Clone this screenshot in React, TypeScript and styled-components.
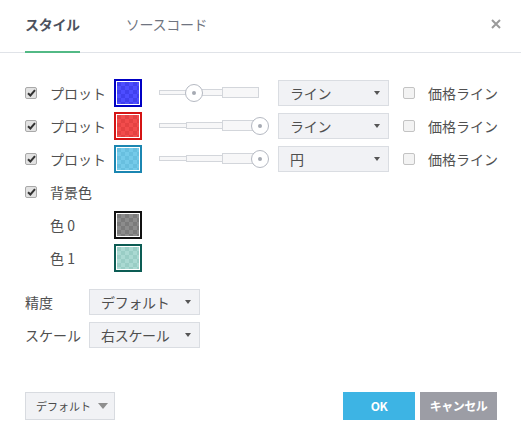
import React from "react";
import styled, { createGlobalStyle } from "styled-components";

const Global = createGlobalStyle`
  html, body { margin: 0; padding: 0; background: #fff; }
  body { font-family: "Noto Sans CJK JP", "Noto Sans", "Liberation Sans", sans-serif; }
  * { box-sizing: border-box; }
`;

const Dialog = styled.div`
  width: 521px;
  height: 445px;
  background: #fff;
  display: flex;
  flex-direction: column;
  color: #4f4f4f;
  font-size: 14px;
`;

const Header = styled.div`
  height: 53px;
  border-bottom: 1px solid #e0e3e8;
  display: flex;
  align-items: stretch;
  padding-left: 25px;
  padding-right: 20px;
`;

const Tab = styled.div<{ $active?: boolean }>`
  display: flex;
  align-items: center;
  margin-right: 46px;
  padding-bottom: 3px;
  font-size: 14px;
  font-weight: ${(p) => (p.$active ? 700 : 400)};
  color: ${(p) => (p.$active ? "#4c525e" : "#6f7480")};
  border-bottom: 2px solid ${(p) => (p.$active ? "#52b985" : "transparent")};
  margin-bottom: -1px;
  letter-spacing: -0.3px;
`;

const Close = styled.div`
  margin-left: auto;
  display: flex;
  align-items: flex-start;
  padding-top: 19px;
`;

const Content = styled.div`
  flex: 1;
  padding: 23px 25px 0 25px;
`;

const Row = styled.div`
  height: 33px;
  display: flex;
  align-items: center;
`;

const Label = styled.span<{ $w?: number; $indent?: number }>`
  width: ${(p) => (p.$w ? `${p.$w}px` : "auto")};
  margin-left: ${(p) => p.$indent || 0}px;
  white-space: nowrap;
  flex-shrink: 0;
  color: #505050;
`;

const Box = styled.span<{ $checked?: boolean }>`
  width: 12px;
  height: 12px;
  border: 1px solid ${(p) => (p.$checked ? "#a9a9a9" : "#c3c3c3")};
  border-radius: 2px;
  background: ${(p) => (p.$checked ? "#e2e2e2" : "#f3f3f3")};
  display: inline-flex;
  align-items: center;
  justify-content: center;
  flex-shrink: 0;
  margin-right: 13px;
`;

const Check = ({ checked }: { checked?: boolean }) => (
  <Box $checked={checked}>
    {checked && (
      <svg width="9" height="8" viewBox="0 0 9 8">
        <path d="M1 4.2 L3.4 6.5 L8 1.2" fill="none" stroke="#333" strokeWidth="2" />
      </svg>
    )}
  </Box>
);

const Swatch = styled.span<{ $border: string; $a: string; $b: string }>`
  width: 28px;
  height: 28px;
  border: 2px solid ${(p) => p.$border};
  padding: 1px;
  background: #fff;
  flex-shrink: 0;
  display: inline-block;
  &::after {
    content: "";
    display: block;
    width: 100%;
    height: 100%;
    background: repeating-conic-gradient(${(p) => p.$a} 0 25%, ${(p) => p.$b} 0 50%) 0 0 / 8px 8px;
  }
`;

const SliderWrap = styled.div`
  position: relative;
  width: 110px;
  height: 20px;
  margin-left: 17px;
  margin-right: 9px;
  display: flex;
  align-items: center;
  flex-shrink: 0;
`;

const Seg = styled.span<{ $w: number; $h: number }>`
  width: ${(p) => p.$w}px;
  height: ${(p) => p.$h}px;
  background: #f7f7f8;
  border: 1px solid #d3d6db;
  margin-left: -1px;
  &:first-child { margin-left: 0; }
`;

const Handle = styled.span`
  position: absolute;
  top: 1px;
  width: 18px;
  height: 18px;
  border-radius: 50%;
  border: 1px solid #b5b9c2;
  background: #fff;
  display: flex;
  align-items: center;
  justify-content: center;
  &::after {
    content: "";
    width: 4px;
    height: 4px;
    border-radius: 50%;
    background: #a6aab3;
  }
`;

const Slider = ({ pos }: { pos: number }) => (
  <SliderWrap>
    <Seg $w={28} $h={5} />
    <Seg $w={37} $h={7} />
    <Seg $w={37} $h={11} />
    <Handle style={{ left: pos }} />
  </SliderWrap>
);

const SelectBox = styled.div<{ $w: number }>`
  width: ${(p) => p.$w}px;
  height: 26px;
  background: #f1f2f5;
  border: 1px solid #dadde2;
  display: flex;
  align-items: center;
  padding: 0 8px 0 11px;
  flex-shrink: 0;
  color: #4f4f4f;
  font-size: 14px;
  letter-spacing: -0.3px;
`;

const SelText = styled.span`
  flex: 1;
  white-space: nowrap;
`;

const Caret = styled.span<{ $size?: number; $color?: string }>`
  width: 0;
  height: 0;
  flex-shrink: 0;
  border-left: ${(p) => (p.$size || 7) / 2}px solid transparent;
  border-right: ${(p) => (p.$size || 7) / 2}px solid transparent;
  border-top: ${(p) => Math.round((p.$size || 7) * 0.55)}px solid ${(p) => p.$color || "#555"};
`;

const Select = ({ w, text }: { w: number; text: string }) => (
  <SelectBox $w={w}>
    <SelText>{text}</SelText>
    <Caret />
  </SelectBox>
);

const PriceCheck = styled.div`
  display: flex;
  align-items: center;
  margin-left: 14px;
`;

const Spacer = styled.div`
  height: 11px;
`;

const Footer = styled.div`
  display: flex;
  align-items: center;
  padding: 0 24px 25px 25px;
`;

const DefaultBtn = styled.div`
  width: 90px;
  height: 28px;
  border: 1px solid #d8dbe0;
  background: #f1f2f5;
  display: flex;
  align-items: center;
  gap: 7px;
  padding: 0 0 0 10px;
  font-size: 11px;
  color: #4a4a4a;
`;

const Btn = styled.div<{ $bg: string; $w: number }>`
  width: ${(p) => p.$w}px;
  height: 28px;
  background: ${(p) => p.$bg};
  color: #fff;
  font-weight: 700;
  font-size: 12px;
  display: flex;
  align-items: center;
  justify-content: center;
  letter-spacing: -0.5px;
  padding-bottom: 2px;
`;

const BtnGroup = styled.div`
  margin-left: auto;
  display: flex;
  gap: 5px;
`;

const plots = [
  { border: "#0000c4", a: "#4d4dff", b: "#4040ee", pos: 26, sel: "ライン" },
  { border: "#d41414", a: "#f24c4c", b: "#e44242", pos: 92, sel: "ライン" },
  { border: "#1b86b1", a: "#75cae9", b: "#68bfdf", pos: 92, sel: "円" },
];

export default function App() {
  return (
    <>
      <Global />
      <Dialog>
        <Header>
          <Tab $active>スタイル</Tab>
          <Tab>ソースコード</Tab>
          <Close>
            <svg width="10" height="10" viewBox="0 0 10 10">
              <path d="M1 1 L9 9 M9 1 L1 9" stroke="#9a9a9a" strokeWidth="2" />
            </svg>
          </Close>
        </Header>
        <Content>
          {plots.map((p, i) => (
            <Row key={i}>
              <Check checked />
              <Label $w={64}>プロット</Label>
              <Swatch $border={p.border} $a={p.a} $b={p.b} />
              <Slider pos={p.pos} />
              <Select w={111} text={p.sel} />
              <PriceCheck>
                <Check />
                <Label>価格ライン</Label>
              </PriceCheck>
            </Row>
          ))}
          <Row>
            <Check checked />
            <Label>背景色</Label>
          </Row>
          <Row>
            <Label $w={64} $indent={25}>色 0</Label>
            <Swatch $border="#111111" $a="#8c8c8c" $b="#7b7b7b" />
          </Row>
          <Row>
            <Label $w={64} $indent={25}>色 1</Label>
            <Swatch $border="#0c5c54" $a="#aad9d2" $b="#99cdc5" />
          </Row>
          <Spacer />
          <Row>
            <Label $w={64}>精度</Label>
            <Select w={111} text="デフォルト" />
          </Row>
          <Row>
            <Label $w={64}>スケール</Label>
            <Select w={111} text="右スケール" />
          </Row>
        </Content>
        <Footer>
          <DefaultBtn>
            <span>デフォルト</span>
            <Caret $size={10} $color="#8e8e8e" />
          </DefaultBtn>
          <BtnGroup>
            <Btn $bg="#3db4e4" $w={72}>OK</Btn>
            <Btn $bg="#9c9da5" $w={77}>キャンセル</Btn>
          </BtnGroup>
        </Footer>
      </Dialog>
    </>
  );
}
